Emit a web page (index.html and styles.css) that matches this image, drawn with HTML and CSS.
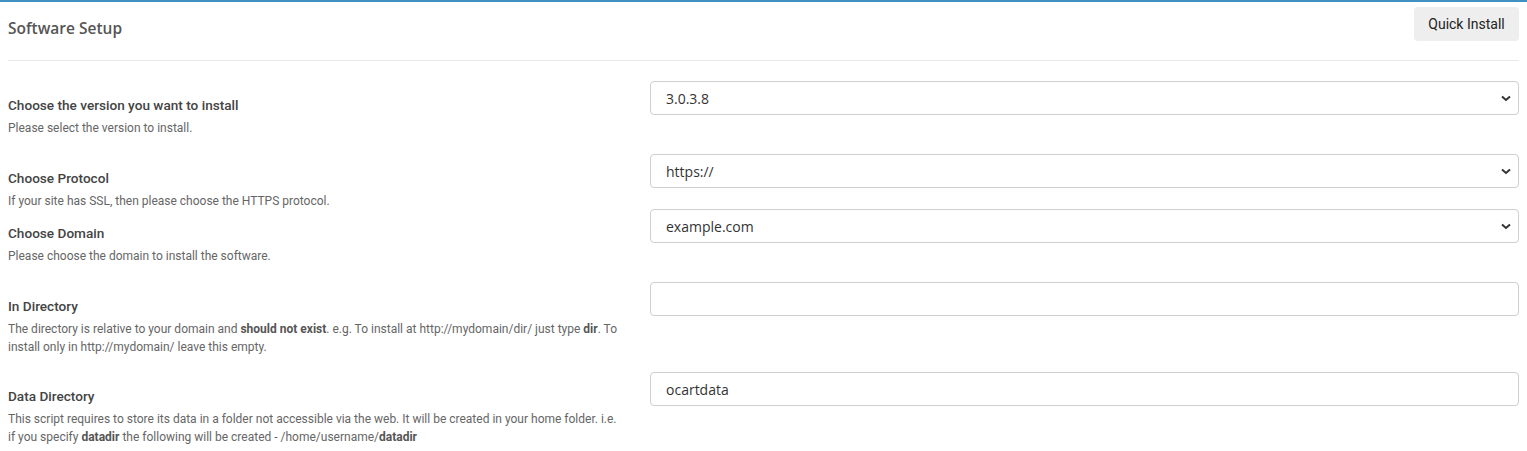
FILE: index.html
```html
<!DOCTYPE html>
<html>
<head>
<meta charset="utf-8">
<link rel="stylesheet" href="styles.css">
</head>
<body>
<div class="page">
  <div class="header">
    <h1 class="title">Software Setup</h1>
    <button class="btn-quick" type="button">Quick Install</button>
  </div>
  <div class="rule"></div>
  <div class="form">
    <div class="row">
      <div class="label-col">
        <div class="label">Choose the version you want to install</div>
        <div class="desc">Please select the version to install.</div>
      </div>
      <div class="field-col">
        <select class="control select"><option>3.0.3.8</option></select>
      </div>
    </div>
    <div class="row row-tight">
      <div class="label-col">
        <div class="label">Choose Protocol</div>
        <div class="desc">If your site has SSL, then please choose the HTTPS protocol.</div>
      </div>
      <div class="field-col">
        <select class="control select"><option>https://</option></select>
      </div>
    </div>
    <div class="row">
      <div class="label-col">
        <div class="label">Choose Domain</div>
        <div class="desc">Please choose the domain to install the software.</div>
      </div>
      <div class="field-col">
        <select class="control select"><option>example.com</option></select>
      </div>
    </div>
    <div class="row row-short">
      <div class="label-col">
        <div class="label">In Directory</div>
        <div class="desc">The directory is relative to your domain and <b>should not exist</b>. e.g. To install at http://mydomain/dir/ just type <b>dir</b>. To install only in http://mydomain/ leave this empty.</div>
      </div>
      <div class="field-col">
        <input class="control" type="text" value="">
      </div>
    </div>
    <div class="row">
      <div class="label-col">
        <div class="label">Data Directory</div>
        <div class="desc">This script requires to store its data in a folder not accessible via the web. It will be created in your home folder. i.e. if you specify <b>datadir</b> the following will be created - /home/username/<b>datadir</b></div>
      </div>
      <div class="field-col">
        <input class="control" type="text" value="ocartdata">
      </div>
    </div>
  </div>
</div>
</body>
</html>
```
FILE: styles.css
```css
* { box-sizing: border-box; }
html, body { margin: 0; padding: 0; background: #fff; }
body { border-top: 2px solid #4190c2; font-family: "Open Sans", sans-serif; }
.page { padding: 0 8px; }
.header {
  display: flex;
  align-items: center;
  justify-content: space-between;
  height: 56px;
  padding-top: 3px;
}
.title {
  margin: 0;
  font-family: "Open Sans", sans-serif;
  font-size: 15.5px;
  font-weight: 600;
  color: #555;
  margin-top: -8px;
}
.btn-quick {
  width: 105px;
  height: 34px;
  border: 0;
  border-radius: 4px;
  background: #eeeeee;
  color: #222;
  font-family: Roboto, "Liberation Sans", sans-serif;
  font-size: 14px;
  margin-top: -15px;
}
.rule { height: 1px; background: #e8e8e8; margin-top: 2px; }
.form { padding-top: 20px; }
.row { display: flex; gap: 15px; margin-bottom: 17px; }
.row-tight { margin-bottom: -1px; }
.row-short { margin-bottom: 16px; }
.label-col { width: 627px; flex: none; padding-top: 16px; padding-right: 12px; }
.field-col { flex: 1; }
.label {
  font-family: Roboto, sans-serif;
  font-size: 13.6px;
  font-weight: 500;
  color: #444;
  line-height: 16px;
  margin-bottom: 6px;
}
.desc {
  font-family: Roboto, sans-serif;
  font-size: 12px;
  line-height: 18px;
  color: #666;
}
.desc b { font-weight: 700; color: #555; }
.control {
  display: block;
  width: 100%;
  height: 34px;
  border: 1px solid #cfcfcf;
  border-radius: 4px;
  background-color: #fff;
  padding: 0 15px;
  font-family: "Open Sans", sans-serif;
  font-size: 14px;
  color: #333;
  outline: none;
}
.select {
  -webkit-appearance: none;
  appearance: none;
  background-image: url("data:image/svg+xml;utf8,<svg xmlns='http://www.w3.org/2000/svg' width='10' height='7' viewBox='0 0 10 7'><path d='M1 1.5l4 3.5 4-3.5' fill='none' stroke='%23333' stroke-width='2'/></svg>");
  background-repeat: no-repeat;
  background-position: right 7px center;
}
```
